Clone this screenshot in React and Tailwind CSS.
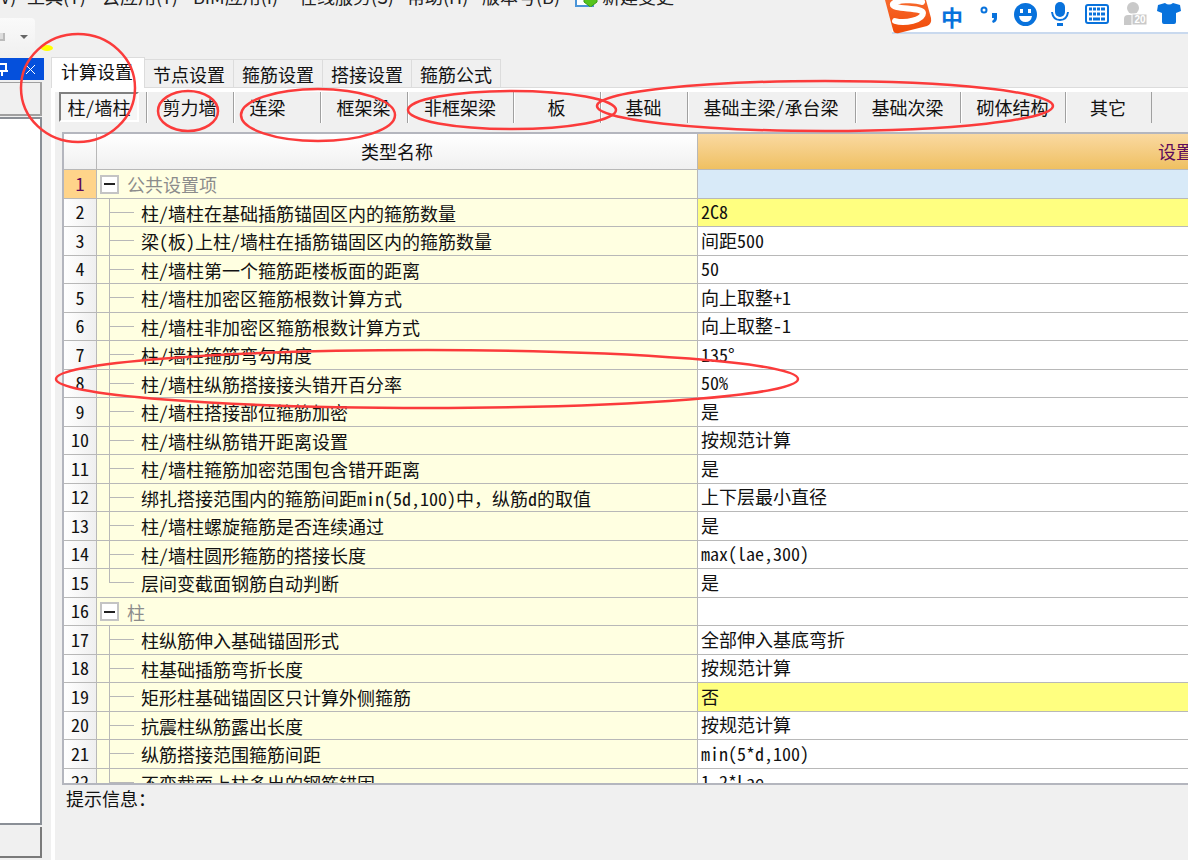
const menus = [
  { label: '工具(T)', width: 'w-[75px]' },
  { label: '云应用(Y)', width: 'w-[91px]' },
  { label: 'BIM应用(I)', width: 'w-[106px]' },
  { label: '在线服务(S)', width: 'w-[108px]' },
  { label: '帮助(H)', width: 'w-[75px]' },
  { label: '版本号(B)', width: 'w-[93px]' },
];

const tabs = ['节点设置', '箍筋设置', '搭接设置', '箍筋公式'];

const parts = [
  { label: '剪力墙', width: 'w-[87px]' },
  { label: '连梁', width: 'w-[87px]', align: 'pr-5' },
  { label: '框架梁', width: 'w-[87px]' },
  { label: '非框架梁', width: 'w-[106px]' },
  { label: '板', width: 'w-[87px]' },
  { label: '基础', width: 'w-[87px]' },
  { label: '基础主梁/承台梁', width: 'w-[168px]' },
  { label: '基础次梁', width: 'w-[105px]' },
  { label: '砌体结构', width: 'w-[105px]' },
  { label: '其它', width: 'w-[86px]' },
];

const rows = [
  { name: '公共设置项', group: true, selected: true },
  { name: '柱/墙柱在基础插筋锚固区内的箍筋数量', value: '2C8', changed: true },
  { name: '梁(板)上柱/墙柱在插筋锚固区内的箍筋数量', value: '间距500' },
  { name: '柱/墙柱第一个箍筋距楼板面的距离', value: '50' },
  { name: '柱/墙柱加密区箍筋根数计算方式', value: '向上取整+1' },
  { name: '柱/墙柱非加密区箍筋根数计算方式', value: '向上取整-1' },
  { name: '柱/墙柱箍筋弯勾角度', value: '135°' },
  { name: '柱/墙柱纵筋搭接接头错开百分率', value: '50%' },
  { name: '柱/墙柱搭接部位箍筋加密', value: '是' },
  { name: '柱/墙柱纵筋错开距离设置', value: '按规范计算' },
  { name: '柱/墙柱箍筋加密范围包含错开距离', value: '是' },
  {
    // full-width comma keeps its own cell
    name: (
      <>
        绑扎搭接范围内的箍筋间距min(5d,100)中<span className="[font-feature-settings:normal]">，</span>纵筋d的取值
      </>
    ),
    value: '上下层最小直径',
  },
  { name: '柱/墙柱螺旋箍筋是否连续通过', value: '是' },
  { name: '柱/墙柱圆形箍筋的搭接长度', value: 'max(lae,300)' },
  { name: '层间变截面钢筋自动判断', value: '是', last: true },
  { name: '柱', group: true },
  { name: '柱纵筋伸入基础锚固形式', value: '全部伸入基底弯折' },
  { name: '柱基础插筋弯折长度', value: '按规范计算' },
  { name: '矩形柱基础锚固区只计算外侧箍筋', value: '否', changed: true },
  { name: '抗震柱纵筋露出长度', value: '按规范计算' },
  { name: '纵筋搭接范围箍筋间距', value: 'min(5*d,100)' },
  { name: '不变截面上柱多出的钢筋锚固', value: '1.2*Lae' },
];

const MenuBar = () => (
  <nav className="h-[18px] overflow-hidden whitespace-nowrap text-[18px] leading-[24px] text-[#222] [font-feature-settings:normal]">
    <div className="-mt-4 flex h-[24px] items-center">
      <span className="w-[27px]">V)</span>
      {menus.map((m) => (
        <button key={m.label} className={`${m.width} shrink-0 text-left`}>
          {m.label}
        </button>
      ))}
      <button className="flex items-center gap-1">
        <svg className="h-[22px] w-[23px]" viewBox="0 0 23 22">
          <path d="M1 0h17v21H1z" fill="#fff" stroke="#4a94d8" strokeWidth="2" />
          <path d="M9 12h13v5l-6.500 5L9 17z" fill="#56c41c" stroke="#3c9a12" />
        </svg>
        新建变更
      </button>
    </div>
  </nav>
);

const SogouBar = () => (
  <div className="absolute top-0 right-0 flex h-[34px] w-[296px] items-start border-b-2 border-[#c9d9ee] bg-white text-[#0872dc]">
    <svg className="-ml-2 h-[36px] w-[48px] shrink-0" viewBox="0 0 48 36">
      <defs>
        <linearGradient id="sogou" x1="0" y1="0" x2="0" y2="1">
          <stop offset="0" stopColor="#f7692c" />
          <stop offset="1" stopColor="#f04a08" />
        </linearGradient>
      </defs>
      <path d="M1 0H42L47 18Q48 24 43 26L15 33Q10 34 9 30Z" fill="url(#sogou)" />
      <path
        d="M38 2C30-1 12 0 9 4C7 10 39 7 39 13C39 20 21 24 11 21"
        fill="none"
        stroke="#fff"
        strokeWidth="6"
        strokeLinecap="round"
      />
    </svg>
    <div className="flex items-center pt-[2px]">
      <button className="h-[28px] w-[40px] text-center text-[22px] leading-[20px] font-bold">中</button>
      <button className="flex h-[22px] w-[35px] justify-center" aria-label="标点">
        <svg className="h-[22px] w-[20px]" viewBox="0 0 20 22">
          <circle cx="4" cy="5" r="2.500" fill="none" stroke="currentColor" strokeWidth="2" />
          <path d="M12 8h5v5q0 4-4 5l-1-2q2-1 2-3h-2z" fill="currentColor" />
        </svg>
      </button>
      <button className="flex h-[26px] w-[36px] justify-center" aria-label="表情">
        <svg className="h-[23px] w-[23px]" viewBox="0 0 23 23">
          <circle cx="11.500" cy="11.500" r="11.500" fill="currentColor" />
          <path d="M6 6h3v4H6zM14 6h3v4h-3zM5 13h13q-1 6-6.500 6T5 13z" fill="#fff" />
        </svg>
      </button>
      <button className="flex h-[28px] w-[34px] justify-center" aria-label="语音">
        <svg className="h-[24px] w-[20px]" viewBox="0 0 20 24">
          <rect x="5" y="0" width="10" height="15" rx="5" fill="currentColor" />
          <path d="M2 10q1 8 8 8t8-8" fill="none" stroke="currentColor" strokeWidth="2" />
          <path d="M7 21h6v3H7z" fill="currentColor" />
        </svg>
      </button>
      <button className="flex h-[24px] w-[39px] justify-center" aria-label="键盘">
        <svg className="h-[20px] w-[24px]" viewBox="0 0 24 20">
          <rect x="1" y="1" width="22" height="18" rx="2" fill="none" stroke="currentColor" strokeWidth="2" />
          <path
            d="M4 5h3m1 0h3m1 0h3m1 0h4M4 10h3m1 0h3m1 0h3m1 0h4M4 15h3m1 0h7m1 0h4"
            stroke="currentColor"
            strokeWidth="3"
          />
        </svg>
      </button>
      <button className="flex h-[28px] w-[38px] justify-center" aria-label="用户">
        <svg className="h-[24px] w-[26px]" viewBox="0 0 26 24">
          <circle cx="11" cy="6" r="6" fill="#c9c9c9" />
          <path d="M2 23v-6q0-4 4-4h12v10z" fill="#c9c9c9" />
          <rect x="10" y="12" width="15" height="11" fill="#c9c9c9" stroke="#fff" />
          <text x="18" y="21" textAnchor="middle" fill="#fff" fontSize="10" fontWeight="bold" fontFamily="Liberation Sans">
            20
          </text>
        </svg>
      </button>
      <button className="flex h-[28px] w-[30px] justify-center" aria-label="皮肤">
        <svg className="h-[24px] w-[24px]" viewBox="0 0 24 24">
          <path d="M8 1q4 3 8 0l7 2 1 6-5 2v9q0 2-2 2H7q-2 0-2-2v-9L0 9l1-6z" fill="currentColor" />
        </svg>
      </button>
    </div>
  </div>
);

const SidePanel = () => (
  <aside className="flex w-[44px] shrink-0 flex-col">
    <div className="flex h-[22px] items-center justify-between bg-[#0550dc] pr-[8px] text-white">
      <svg className="h-[16px] w-[8px]" viewBox="0 0 8 16">
        <path d="M0 3h7M0 10h8M6 3v7M2 10v5" stroke="#fff" strokeWidth="2" />
      </svg>
      <button aria-label="关闭">
        <svg className="h-[11px] w-[11px]" viewBox="0 0 11 11">
          <path d="M1 1l9 9M10 1l-9 9" stroke="#fff" strokeWidth="1" />
        </svg>
      </button>
    </div>
    <div className="mt-[2px] mr-[2px] h-[34px] border-t border-r-2 border-b-2 border-[#a0a0a0] bg-[#f0f0f0]" />
    <div className="mt-px mr-[2px] flex-1 border-2 border-l-0 border-[#8a8f96] bg-white" />
    <div className="mt-[2px] mr-[2px] mb-[2px] h-[31px] border-r-2 border-b-2 border-[#7a7a7a]" />
  </aside>
);

const TabBar = () => (
  <div className="flex h-[30px] items-end border-b border-[#dcdcdc]">
    <button className="-mb-px h-[31px] w-[94px] shrink-0 border border-b-0 border-[#dcdcdc] bg-white pr-[2px] pb-[5px]">
      计算设置
    </button>
    {tabs.map((t) => (
      <button key={t} className="h-[28px] w-[89px] shrink-0 border border-b-0 border-l-0 border-[#dcdcdc]">
        {t}
      </button>
    ))}
  </div>
);

const PartBar = () => (
  <div className="flex h-[31px] shrink-0 whitespace-nowrap">
    <div className="w-[92px] shrink-0 border-r border-[#a0a0a0] pl-[4px]">
      <button className="h-[30px] w-[80px] border-2 border-t-[#808080] border-r-white border-b-white border-l-[#808080] bg-[#f6f6f6] pb-px">
        柱/墙柱
      </button>
    </div>
    {parts.map((p) => (
      <button
        key={p.label}
        className={`${p.width} ${p.align || 'pr-[2px]'} shrink-0 border-r border-l border-r-[#a0a0a0] border-l-white pb-[2px]`}
      >
        {p.label}
      </button>
    ))}
  </div>
);

const TreeCell = ({ row }) => {
  if (row.group) {
    return (
      <div className="flex h-[27px] items-center pl-[3px] text-[#8c8c8c] group-odd:h-[28px]">
        <button
          aria-label="折叠"
          className="mr-[8px] flex h-[19px] w-[19px] items-center justify-center border-2 border-[#c4c4c4] bg-white"
        >
          <span className="h-[2px] w-[11px] bg-[#222]" />
        </button>
        <span>{row.name}</span>
      </div>
    );
  }
  return (
    <div className="flex h-[27px] group-odd:h-[28px]">
      <div className={`w-[13px] border-r border-[#b8b8b8] ${row.last ? 'h-1/2' : 'h-full'}`} />
      <div className="h-1/2 w-[24px] border-b border-[#b8b8b8]" />
      <span className="pt-px pl-[7px] leading-[26px]">{row.name}</span>
    </div>
  );
};

const SettingsTable = () => (
  <table className="w-full table-fixed border-separate border-spacing-0 whitespace-nowrap">
    <colgroup>
      <col className="w-[33px]" />
      <col className="w-[601px]" />
      <col className="w-[956px]" />
    </colgroup>
    <thead>
      <tr className="h-[36px]">
        <th className="border-r border-b border-[#b8b8b8] bg-linear-to-b from-white to-[#f0f0f0]" />
        <th className="border-r border-b border-[#b8b8b8] bg-linear-to-b from-white to-[#f0f0f0] p-0 pb-[2px] font-normal">
          类型名称
        </th>
        <th className="border-b border-[#b8b8b8] bg-linear-to-b from-[#fad9a0] to-[#efc061] p-0 pb-[2px] font-normal text-[#5c0a5c]">
          设置
        </th>
      </tr>
    </thead>
    <tbody>
      {rows.map((row, i) => (
        <tr key={i} className="group">
          <td
            className={`border-r border-b border-[#b8b8b8] p-0 pb-[3px] text-center ${
              row.selected ? 'bg-[#ffd48a] text-[#5c0a5c]' : 'bg-linear-to-r from-white to-[#efefef]'
            }`}
          >
            {i + 1}
          </td>
          <td className="border-r border-b border-[#b8b8b8] bg-[#ffffe1] p-0">
            <TreeCell row={row} />
          </td>
          <td
            className={`border-b border-[#b8b8b8] p-0 pb-[3px] pl-[3px] ${
              row.selected ? 'bg-[#d8eaf8]' : row.changed ? 'bg-[#ffff80]' : 'bg-white'
            }`}
          >
            {row.value}
          </td>
        </tr>
      ))}
    </tbody>
  </table>
);

// hand-drawn marks over the window
const Marks = () => (
  <svg className="pointer-events-none absolute top-0 left-0 h-[420px] w-[1188px]" viewBox="0 0 1188 420">
    <ellipse cx="47" cy="48" rx="6" ry="3" fill="#ffff00" />
    <g fill="none" stroke="#fb3b3b" strokeWidth="2.500">
      <ellipse cx="78" cy="88" rx="57" ry="54" />
      <ellipse cx="188" cy="111" rx="30" ry="20" />
      <ellipse cx="318" cy="115" rx="77" ry="26" />
      <ellipse cx="512" cy="110" rx="104" ry="19" />
      <ellipse cx="825" cy="106" rx="228" ry="25" />
      <ellipse cx="427" cy="379" rx="371" ry="29" />
    </g>
  </svg>
);

export default function App() {
  return (
    <div className="relative flex h-screen flex-col overflow-hidden bg-[#f0f0f0] font-['Noto_Sans_CJK_SC',sans-serif] text-[18px] leading-[24px] text-[#111] [font-feature-settings:'hwid']">
      <MenuBar />
      <div className="mb-[2px] flex h-[38px] w-[35px] shrink-0 items-center justify-between rounded-r bg-linear-to-b from-[#fafafa] to-[#f0f0f0] pr-[7px]">
        <span className="h-[8px] w-[5px] border-r-2 border-b-2 border-[#bbb] bg-[#ddd]" />
        <span className="border-x-4 border-t-4 border-x-transparent border-t-[#666]" />
      </div>
      <div className="flex min-h-0 flex-1">
        <SidePanel />
        <main className="ml-[7px] flex min-w-0 flex-1 flex-col">
          <TabBar />
          <div className="flex min-h-0 flex-1 flex-col border-t-4 border-l-4 border-white">
            <PartBar />
            <div className="mt-[9px] ml-[7px] min-h-0 flex-1 overflow-hidden border-2 border-r-0 border-[#b4b6be] bg-white">
              <div className="w-[1590px]">
                <SettingsTable />
              </div>
            </div>
            <p className="h-[75px] shrink-0 pt-px pl-[11px]">提示信息：</p>
          </div>
        </main>
      </div>
      <SogouBar />
      <Marks />
    </div>
  );
}
